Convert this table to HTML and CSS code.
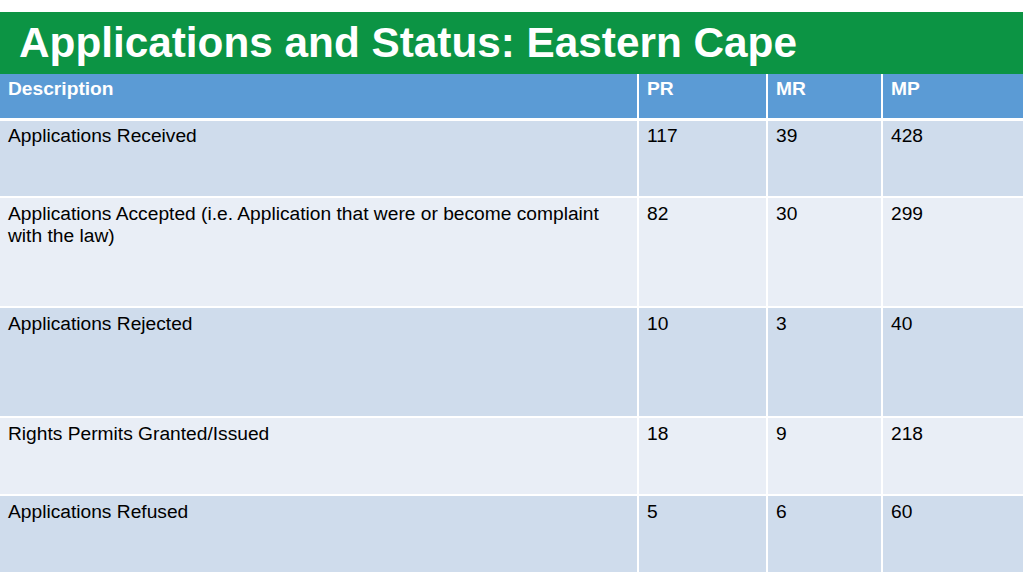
FILE: index.html
```html
<!DOCTYPE html>
<html>
<head>
<meta charset="utf-8">
<link rel="stylesheet" href="styles.css">
</head>
<body>
<div class="slide">
  <h1 class="title">Applications and Status: Eastern Cape</h1>
  <table class="data">
    <colgroup>
      <col class="c-desc"><col class="c-pr"><col class="c-mr"><col class="c-mp">
    </colgroup>
    <thead>
      <tr class="head"><th>Description</th><th>PR</th><th>MR</th><th>MP</th></tr>
    </thead>
    <tbody>
      <tr class="odd r-short r-first"><td>Applications Received</td><td>117</td><td>39</td><td>428</td></tr>
      <tr class="even r-tall"><td>Applications Accepted (i.e. Application that were or become complaint with the law)</td><td>82</td><td>30</td><td>299</td></tr>
      <tr class="odd r-tall"><td>Applications Rejected</td><td>10</td><td>3</td><td>40</td></tr>
      <tr class="even r-short"><td>Rights Permits Granted/Issued</td><td>18</td><td>9</td><td>218</td></tr>
      <tr class="odd r-short"><td>Applications Refused</td><td>5</td><td>6</td><td>60</td></tr>
    </tbody>
  </table>
</div>
</body>
</html>
```
FILE: styles.css
```css
* { box-sizing: border-box; }
html, body { margin: 0; padding: 0; background: #ffffff; }
body { font-family: "Liberation Sans", Arial, sans-serif; }
.slide { width: 1024px; height: 575px; padding-top: 12px; overflow: hidden; }
.title {
  margin: 0;
  width: 1023px;
  height: 62px;
  background: #0c9444;
  color: #ffffff;
  font-size: 42.3px;
  font-weight: bold;
  line-height: 62px;
  padding-left: 19px;
  white-space: nowrap;
}
.data {
  width: 1023px;
  border-collapse: collapse;
  table-layout: fixed;
}
.c-desc { width: 638px; }
.c-pr { width: 129px; }
.c-mr { width: 115px; }
.c-mp { width: 141px; }
.data th, .data td {
  text-align: left;
  vertical-align: top;
  padding: 5px 8px 0;
  font-size: 19.2px;
  line-height: 22px;
  border: 2px solid #ffffff;
}
.data tr > :first-child { border-left: none; }
.data tr > :last-child { border-right: none; }
.head th {
  background: #5b9bd5;
  color: #ffffff;
  font-weight: bold;
  height: 45px;
  padding-top: 4px;
  border-top: none;
  border-bottom-width: 3px;
}
.r-first td { padding-top: 4px; }
.odd td { background: #cfdcec; color: #000; }
.even td { background: #e9eef6; color: #000; }
.r-short td { height: 78px; }
.r-tall td { height: 110px; }
```
